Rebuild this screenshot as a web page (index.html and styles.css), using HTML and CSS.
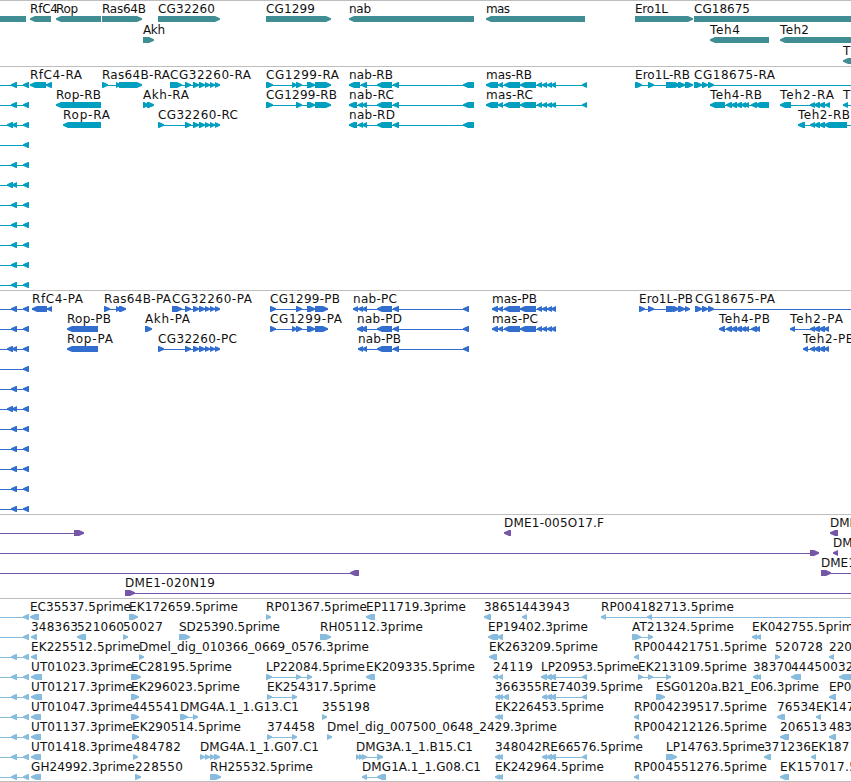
FILE: index.html
```html
<!DOCTYPE html>
<html lang="en">
<head>
<meta charset="utf-8">
<title>Genome tracks</title>
<link rel="stylesheet" href="styles.css">
</head>
<body>
<main class="browser" id="browser"></main>
<script src="tracks.js"></script>
</body>
</html>
```
FILE: styles.css
```css
body {
  margin: 0;
  background: #fff;
  overflow: hidden;
}

.browser {
  display: flex;
  flex-direction: column;
  box-sizing: border-box;
  width: 851px;
  height: 782px;
  border-bottom: 1px solid #bebebe;
}

.track {
  box-sizing: border-box;
  border-top: 1px solid #bebebe;
  overflow: hidden;
}

.track svg {
  display: block;
  overflow: hidden;
}

.genes { height: 66px; color: #408e93; }
.transcripts { height: 224px; color: #009fbf; }
.proteins { height: 224px; color: #326ece; }
.clones { height: 84px; color: #7557a8; }
.ests { height: 183px; color: #88bcde; }

.shape {
  fill: currentColor;
}

.intron {
  fill: currentColor;
  shape-rendering: crispEdges;
}

.label {
  fill: #111;
  font: 12px "DejaVu Sans", sans-serif;
}
```
FILE: tracks.js
```js
// Row syntax: items separated by spaces.
//   name@start-end   label        =start-end   connecting line
//   <start-end       left arrow   >start-end   right arrow
//   #start-end       plain block
const A = '=0-29 <11-17 <23-29 ';
const B = '=0-29 <7-13 <12-17 <23-29 ';
const C = '=0-29 <23-29 ';
const cgTail = ' >185-191 >193-199 >199-205 >205-210 >210-215 >215-220 ';
const nabTail = ' <377-392 <393-399 ';
const masMid = ' <498-503 <504-520 <520-536 <537-542 <542-547 <547-552 <551-556 ';
const teh4Mid = ' <726-732 <731-737 <736-742 <741-746 <744-749 ';
const teh2Mid = ' <810-815 <814-820 <819-825 ';
const reExons = ' =542-587 <542-547 <546-552 <550-556 <582-587 ';
const pair = ' <495-500 <498-503 ';

const tracks = [
  { name: 'genes', height: 65, step: 21, rows: [
    '#0-26 RfC4@30-58 <30-51 Rop@56-78 <56-101 Ras64B@102-146 >102-142 CG32260@158-215 >158-220 CG1299@266-315 >266-331 nab@349-371 <349-474 mas@486-510 <486-585 Ero1L@635-668 >635-693 CG18675@694-750 #694-851',
    'Akh@143-165 >143-154 Teh4@710-740 <710-769 Teh2@780-809 <780-856',
    'T@843 <843-856'
  ] },
  { name: 'transcripts', height: 223, step: 20, rows: [
    A + 'RfC4-RA@30-82 =30-52 <30-46 <46-52 Ras64B-RA@102-170 =102-142 >102-108 >116-121 >119-142 CG32260-RA@170-251 =170-220 >170-182' + cgTail +
    'CG1299-RA@266-339 =266-331 >266-273 >292-297 >296-302 >307-315 >315-331 nab-RB@349-393 =349-474 <349-360 <361-367' + nabTail + '<463-474 mas-RB@486-532 =486-587 <486-498' + masMid + '<582-587 Ero1L-RB@635-690 =635-692 >635-642 >648-654 >666-678 >674-680 >678-685 >685-693 CG18675-RA@694-775 =694-851 >694-702 >702-708 >708-714',
    A + 'Rop-RB@56-101 <56-101 Akh-RA@143-189 >143-149 >147-154 CG1299-RB@266-337 =266-331 >266-273 >296-302 >307-315 >315-331 nab-RC@349-394 =349-474 <349-357 <358-363 <362-367' + nabTail + '<463-474 mas-RC@486-533 =486-587 <486-498' + masMid + '<582-587 Teh4-RB@710-762 =710-769 <710-725' + teh4Mid + '<751-757 <755-769 Teh2-RA@780-834 =780-830 <780-791' + teh2Mid + '<825-830 T@843 =843-851 <843-848',
    B + 'Rop-RA@63-110 <63-101 CG32260-RC@158-238 =158-220 >158-164' + cgTail + 'nab-RD@349-395 =349-474 <349-357 <358-363 <362-367' + nabTail + '<463-474 Teh2-RB@798-850 =798-851 <798-805' + teh2Mid + '<824-847',
    C, A, B, A, A, A, A, A
  ] },
  { name: 'proteins', height: 223, step: 20, rows: [
    A + 'RfC4-PA@32-83 =32-52 <32-47 <47-52 Ras64B-PA@104-171 =104-126 >104-110 >116-121 >119-126 CG32260-PA@172-252 =172-220 >172-182' + cgTail + 'CG1299-PB@270-340 =270-328 >270-276 >296-302 >307-315 >315-328 nab-PC@353-397 =353-469 <353-358 <358-363 <362-367' + nabTail + '<463-469 mas-PB@492-537 =492-556 <492-498' + masMid + 'Ero1L-PB@639-693 =639-690 >639-645 >648-654 >666-677 >673-679 >678-685 >685-690 CG18675-PA@695-775 =695-851 >695-702 >702-708 >708-714',
    A + 'Rop-PB@67-111 <67-98 Akh-PA@145-190 >145-152 CG1299-PA@270-342 =270-328 >270-276 >292-297 >296-302 >307-315 >315-328 nab-PD@357-402 =357-469 <357-363 <361-367' + nabTail + '<463-469 mas-PC@492-538 =492-556 <492-498' + masMid + 'Teh4-PB@719-770 =719-760 <719-725' + teh4Mid + '<751-757 <755-760 Teh2-PA@790-843 =790-829 <790-795' + teh2Mid + '<824-829',
    B + 'Rop-PA@67-113 <67-98 CG32260-PC@158-237 =158-220 >158-164' + cgTail + 'nab-PB@358-401 =358-469 <358-363 <362-367' + nabTail + '<463-469 Teh2-PB@803-854 =803-829 <803-808' + teh2Mid + '<824-829',
    C, A, B, A, A, A, A, A
  ] },
  { name: 'clones', height: 83, step: 20, rows: [
    '=0-84 >74-84 DME1-005O17.F@504-604 <504-511 DME1@830 <830-838',
    '=0-819 >810-819 DME1@833 <833-838',
    '=0-359 <350-359 DME1@821 >821-831 =821-851',
    'DME1-020N19@125-215 >125-135 =125-851'
  ] },
  { name: 'ests', height: 182, step: 20, rows: [
    C + 'EC35537.5prime@30-131 <30-39 EK172659.5prime@129-238 >129-138 RP01367.5prime@266-367 >266-271 EP11719.3prime@366-466 <366-375 38651@484-523 <484-491 443943@522-570 <522-527 RP004182713.5prime@601-734 =601-851 <601-606 <647-652',
    C + '348363@31-78 <31-37 521060@77-124 <77-86 50027@123-163 >123-128 SD25390.5prime@179-280 >179-190 RH05112.3prime@320-423 >320-331 EP19402.3prime@488-588 <488-498 <497-503 AT21324.5prime@632-734 =632-653 >632-641 >648-653 EK042755.5prime@752-861 <752-757 <756-761',
    A + 'EK225512.5prime@31-140 <31-37 Dmel_dig_010366_0669_0576.3prime@139-369 >139-144 EK263209.5prime@489-598 <489-497 RP004421751.5prime@634-767 <634-639 520728@775-823 >775-780 220@829 <829-834',
    A + 'UT01023.3prime@31-133 <31-42 EC28195.5prime@131-232 >131-141 LP22084.5prime@266-365 =266-312 >266-272 >296-301 >307-312 EK209335.5prime@366-475 <366-375 24119@493-533 <493-498 <498-503 LP20953.5prime@541-639 =541-587 <541-547 <546-552 <550-556 <582-587 EK213109.5prime@638-747 =638-671 >638-643 >648-653 >666-671 38370@753-792 <753-758 <756-761 444500@791-838 <791-801 32@838 <839-856',
    A + 'UT01217.3prime@31-133 <31-42 EK296023.5prime@131-240 >131-139 EK254317.5prime@267-376 =267-297 >267-272 >292-297 366355@495-542 <495-500 <498-503 <503-509 RE74039.5prime@542-643' + reExons + 'ESG0120a.B21_E06.3prime@656-819 >656-665 EP0@829 <829-836',
    A + 'UT01047.3prime@31-133 <31-41 445541@132-179 >131-139 DMG4A.1_1.G13.C1@180-299 =180-198 >180-188 >193-198 355198@322-370 >322-327 EK226453.5prime@495-604' + pair + 'RP004239517.5prime@634-767 <634-639 76534@777-816 <777-785 EK147@816 <816-821',
    A + 'UT01137.3prime@31-133 <31-41 EK290514.5prime@132-241 >132-139 374458@267-315 =267-297 >267-272 >292-297 Dmel_dig_007500_0648_2429.3prime@327-557 >327-332 RP004212126.5prime@634-767 <634-639 206513@780-827 <780-789 483@829 <829-836',
    A + 'UT01418.3prime@31-133 <31-41 484782@133-181 >133-138 DMG4A.1_1.G07.C1@200-319 >200-205 >205-210 >210-215 >214-220 DMG3A.1_1.B15.C1@356-473 =356-383 >356-360 >359-364 >362-367 >377-383 348042@495-542' + pair + 'RE66576.5prime@542-643' + reExons + 'LP14763.5prime@666-765 >666-677 371236@764-811 <764-771 EK187@811 <811-816',
    A + 'GH24992.3prime@31-135 <31-41 228550@135-183 >135-141 RH25532.5prime@210-313 >210-221 DMG1A.1_1.G08.C1@362-481 =362-386 <362-367 <377-386 EK242964.5prime@495-604' + pair + 'RP004551276.5prime@634-767 <634-639 EK157017.5@780-857 <780-789'
  ] }
];

function drawItem(item, top) {
  const label = item.match(/^(.+)@(\d+)(?:-(\d+))?$/);
  if (label) {
    const fit = label[3] ? ` textLength="${label[3] - label[2]}"` : '';
    return `<text class="label" x="${label[2]}" y="${top + 12}"${fit}>${label[1]}</text>`;
  }
  const [a, b] = item.slice(1).split('-').map(Number);
  const y0 = top + 15, y1 = y0 + 6;
  const head = Math.min(5, b - a);
  const arrow = (tip, neck, back) =>
    `<path class="shape" d="M${tip} ${y0 + 2.3}L${neck} ${y0}H${back}V${y1}H${neck}L${tip} ${y0 + 3.7}Z"/>`;
  switch (item[0]) {
    case '=': return `<rect class="intron" x="${a}" y="${top + 18}" width="${b - a}" height="1"/>`;
    case '#': return `<rect class="shape" x="${a}" y="${y0}" width="${b - a}" height="6"/>`;
    case '<': return arrow(a, a + head, b);
    default: return arrow(b, b - head, a);
  }
}

document.getElementById('browser').innerHTML = tracks.map(track => {
  const body = track.rows.map((row, i) =>
    row.trim().split(/\s+/).map(item => drawItem(item, i * track.step)).join('')
  ).join('');
  return `<section class="track ${track.name}"><svg width="851" height="${track.height}">${body}</svg></section>`;
}).join('');
```
